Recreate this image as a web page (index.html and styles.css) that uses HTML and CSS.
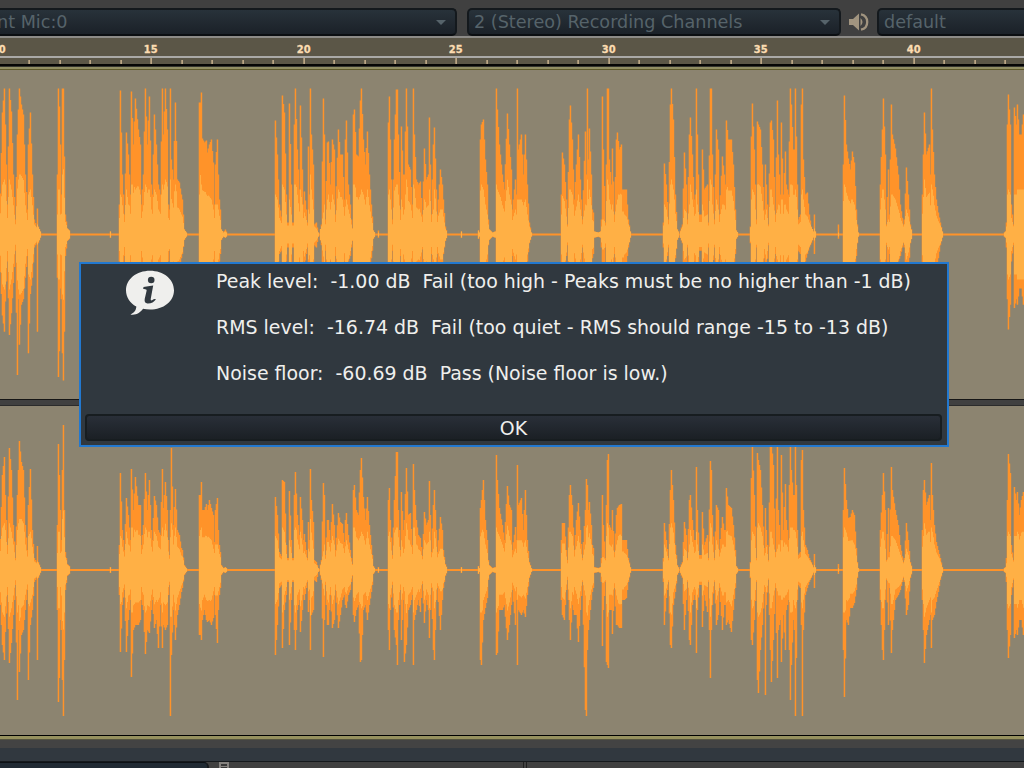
FILE: index.html
```html
<!DOCTYPE html>
<html lang="en">
<head>
<meta charset="utf-8">
<title>ACX Check</title>
<link rel="stylesheet" href="styles.css">
</head>
<body>
<div class="app">
  <header class="toolbar">
    <div class="combo combo-mic"><span>nt Mic:0</span><i class="arrow"></i></div>
    <div class="combo combo-channels"><span>2 (Stereo) Recording Channels</span><i class="arrow"></i></div>
    <svg class="speaker" width="22" height="20" viewBox="0 0 22 20">
      <path d="M1 7H5L11 1.5V18.5L5 13H1Z" fill="#a1947f"/>
      <path d="M12.5 6Q16.5 10 12.5 14Z" fill="#a1947f"/>
      <path d="M13 2.3C21.3 4 21.3 16 13 17.7" fill="none" stroke="#a1947f" stroke-width="2.3"/>
    </svg>
    <div class="combo combo-output"><span>default</span></div>
  </header>
  <div class="ruler">
    <svg id="ruler" width="1024" height="31"></svg>
  </div>
  <main class="tracks">
    <svg class="channel" id="left" width="1024" height="329"></svg>
    <div class="divider"></div>
    <svg class="channel" id="right" width="1024" height="329"></svg>
  </main>
  <div class="track-edge"></div>
  <div class="gap"></div>
  <div class="status"></div>
  <footer class="bottom">
    <div class="field"></div><div class="box"></div><div class="grip"></div>
  </footer>
</div>
<section class="dialog">
  <div class="message">
    <svg class="info" width="50" height="46" viewBox="0 0 50 46">
      <path d="M25 0.7C38.5 0.7 49 9 49 20.2S38.5 39.5 25 39.5C22.5 39.5 20.2 39.2 18 38.7C15.500 42.500 11 45.500 5.500 44.500C9 43 11.300 40 11.300 36.500C5 33 1 27.200 1 20.200C1 9 11.500 0.7 25 0.7Z" fill="#efefed"/>
      <circle cx="26.200" cy="10" r="3.300" fill="#30383f"/>
      <path d="M18.500 17Q23 16.500 28.200 15.600L25.800 28.500Q25.200 31.300 27.500 30Q29 28.700 31 29.300Q28 33.700 22.500 33.500Q19 33 19.700 29L21.600 20.700Q22 18.700 18.200 19Z" fill="#30383f"/>
    </svg>
    <div class="lines">
      <p>Peak level:&nbsp; -1.00 dB&nbsp; Fail (too high - Peaks must be no higher than -1 dB)</p>
      <p>RMS level:&nbsp; -16.74 dB&nbsp; Fail (too quiet - RMS should range -15 to -13 dB)</p>
      <p>Noise floor:&nbsp; -60.69 dB&nbsp; Pass (Noise floor is low.)</p>
    </div>
  </div>
  <button class="ok">OK</button>
</section>
<script src="wave.js"></script>
</body>
</html>
```

FILE: styles.css
```css
* { box-sizing: border-box; }
body { margin: 0; width: 1024px; height: 768px; overflow: hidden; background: #404040; font-family: "DejaVu Sans", sans-serif; }
.app { display: flex; flex-direction: column; height: 768px; }
.toolbar { height: 36px; flex: none; display: flex; padding-top: 8px; background: #404040; }
.combo { height: 28px; flex: none; display: flex; align-items: center; justify-content: space-between; border: 2px solid #14191d; border-bottom-color: #0b0e11; border-radius: 5px; background: linear-gradient(#28323a, #1b2128); color: #56636a; font-size: 17.6px; white-space: nowrap; }
.combo-mic { width: 457px; margin-right: 10px; border-left: 0; border-radius: 0 5px 5px 0; }
.combo-mic span { margin-left: -3px; }
.combo-channels { width: 374px; padding-left: 5px; }
.combo-output { width: 160px; padding-left: 5px; }
.arrow { width: 0; height: 0; border: 5px solid transparent; border-top-color: #56636a; border-bottom: 0; margin-right: 9px; }
.speaker { flex: none; margin: 4px 7px 0 7px; }
.ruler { height: 34px; flex: none; background: linear-gradient(#8d8b87 0 2px, #5b5647 2px 20px, #aaa9a7 20px 22px, #5b5647 22px 28px, #050505 28px 30px, #34342f 30px 31px, #918e63 31px 33px, #5e592b 33px 34px); }
.ruler svg { display: block; }
.ruler text { font: bold 11px "DejaVu Sans Condensed", "DejaVu Sans"; font-stretch: condensed; fill: #fbdcb1; stroke: #fbdcb1; stroke-width: 0.3px; text-anchor: middle; }
.tracks { flex: none; height: 665px; background: #8c8470; }
.channel { display: block; }
.peak { fill: #ff9329; }
.rms { fill: #ffb045; }
.divider { height: 7px; background: #404040; border-top: 1px solid #161616; border-bottom: 1px solid #2b2b2b; }
.track-edge { height: 5px; flex: none; border-top: 1px solid #000; background: #96915f; border-bottom: 1px solid #55543f; }
.gap { height: 8px; flex: none; background: #434343; }
.status { height: 14px; flex: none; background: #31383f; border-bottom: 1px solid #15191c; }
.bottom { flex: 1; display: flex; background: #404040; }
.field { width: 209px; margin-right: 10px; background: #202a33; border-top: 1px solid #0c1014; border-right: 2px solid #15191d; border-radius: 0 5px 0 0; }
.box { width: 10px; border: 2px solid #85827f; border-bottom: 0; background: linear-gradient(#383838 2px, #85827f 2px 3px, #383838 3px); }
.grip { width: 4px; margin-left: 294px; border: solid #1f1f1f; border-width: 0 1px; }
.dialog { position: absolute; left: 79px; top: 262px; width: 870px; height: 185px; padding: 2px 5px 4px 4px; border: 2px solid #2278cf; background: #30383f; color: #efefed; display: flex; flex-direction: column; }
.message { display: flex; flex: none; height: 148px; }
.info { margin: 4px 0 0 40px; flex: none; }
.lines { margin: 1px 0 0 41px; font-size: 18.96px; white-space: nowrap; }
.lines p { margin: 0; height: 46px; line-height: 28px; }
.ok { height: 27px; padding: 0; border: 2px solid #171d20; border-radius: 4px; background: linear-gradient(#292f38, #1b2025); color: #efefed; font: 18.96px/22px "DejaVu Sans", sans-serif; }
```

FILE: wave.js
```js
// Envelope keypoints: x, left-channel peak, right-channel peak, right-channel trough, rms.
// Values left out are derived from the left-channel peak.
const keys = `0 41 31 35 30|2 122 95 75 50|4 146 113 90 55|5 110 75 62 50|7 30 25 25 20|9 146 122 93 55|11 123 100 73 45|13 60 45 45 30|15 15 12 15 12|17 100 75 130 50|18 125 100 60 55|19 146 129 102 60|21 130 108 65 60|23 120 100 60 55|25 60 45 40 35|27 25 20 20 20|28 90 65 110 40|30 122 101 55 45|32 60 40 40 30|34 15 12 12 10|36 8 8 8 8|37 26 24 90 10|38 8 8 8 8|40 3 3 3 3|41 1|56 1|57 60 45 40 20|58 146 126 132 45|59 128 95 108 45|60 90 60 50 20|61 40 30 60 30|62 146 100 110 60|63 146 145 146 70|64 78 60 90 50|65 20 18 20 18|67 6 6 6 6|69 4 4 4 4|70 1|109 1|110 3|111 1|118 1|119 30 25 25 20|120 144 97 82 40|122 60 40 35 35|124 20 20 20 20|126 102 72 82 45|128 80 55 50 30|130 40 30 30 28|131 143 101 107 50|133 90 60 60 50|135 136 93 55 45|138 105 65 55 50|140 90 65 50 40|141 30 25 30 20|143 60 45 40 35|145 146 97 84 50|147 90 60 60 45|149 138 90 63 45|151 50 40 40 30|152 40 30 30 30|154 120 74 58 45|156 90 65 50 40|158 50 40 78 35|160 40 35 35 30|162 146 101 78 50|163 100 62 55 45|165 146 88 60 55|167 105 60 55 50|168 30 30 25 25|169 25 15 15 15|170 146 60 146 55|171 75 122 85 55|173 55 45 40 40|175 132 81 70 50|177 55 40 45 40|179 52 35 35 25|181 40 22 22 20|182 35 20 18 18|184 5 5 5 5|186 2|187 1|198 1|199 132 75 65 40|200 132 75 65 65|201 142 88 70 50|202 96 60 50 48|204 92 60 40 45|206 94 66 50 40|207 82 60 52 40|209 90 70 50 38|211 95 62 55 35|213 72 55 48 25|214 30 28 25 20|215 70 60 45 30|217 95 72 73 30|218 60 40 40 25|219 35 25 25 20|220 25 18 18 15|221 5 5 5 5|223 2|225 5 3 3 3|227 1|274 1|275 114 73 85 40|277 80 55 55 35|279 30 18 18 20|281 18 14 15 14|282 139 90 78 50|284 122 88 40 45|286 40 25 25 20|287 12 12 12 12|288 12 12 12 12|289 131 79 75 35|291 50 30 30 20|292 12 12 12 12|293 12 12 12 12|294 110 75 60 50|295 146 98 80 50|297 85 55 40 45|299 45 35 30 28|300 129 73 62 45|302 65 50 40 30|303 30 30 25 20|304 43 36 30 22|306 25 20 18 15|307 12 12 12 12|308 88 48 42 25|309 40 30 30 30|310 146 101 80 60|311 100 70 45 45|313 70 48 40 25|314 10 10 10 8|316 12 8 12 6|318 2|319 1|321 10 10 10 10|323 136 87 87 22|324 100 75 50 30|325 15 15 15 15|327 92 50 55 35|328 93 50 55 40|330 50 30 25 25|332 95 66 58 40|334 85 45 50 30|335 20 20 20 18|338 105 57 58 45|340 80 48 45 40|342 80 46 30 35|344 35 28 25 20|345 95 50 35 28|346 114 57 38 35|348 50 35 25 25|350 30 20 20 18|351 15 12 12 10|352 6 6 6 6|353 120 80 45 50|354 125 85 52 50|356 80 60 40 45|358 78 55 35 35|360 134 100 92 40|361 146 112 90 45|363 95 73 40 40|365 70 50 35 30|367 103 73 50 45|369 60 45 35 30|371 30 25 22 22|372 18 15 15 15|373 4 4 4 4|375 1|377 1|378 4 3 3 2|379 1|387 1|388 112 70 60 40|389 138 82 80 45|390 95 50 40 35|392 15 15 15 15|394 95 70 60 45|396 145 118 75 50|397 145 118 95 50|398 100 60 50 40|400 25 20 20 18|401 108 78 70 35|403 60 40 30 20|404 60 50 92 25|406 146 102 75 55|408 70 55 40 40|410 65 57 35 30|412 30 25 25 25|413 146 106 95 50|414 100 80 50 50|416 55 50 40 30|418 50 35 30 30|420 53 32 42 22|422 20 14 14 14|424 86 58 53 35|426 55 45 30 30|428 60 50 40 35|429 117 89 68 45|430 70 55 40 35|431 20 18 18 16|433 90 65 80 25|434 107 80 90 45|436 45 40 30 30|437 20 18 18 16|440 65 53 60 25|442 50 40 30 25|443 35 20 18 18|445 8 6 6 6|447 1|460 1|461 3|462 1|477 1|478 4|479 2|480 95 62 90 50|481 110 70 95 50|483 115 90 50 45|485 75 50 38 30|487 50 30 28 20|488 15 10 10 10|489 5 5 5 5|492 2|495 3|496 146 115 85 50|497 125 90 83 45|499 90 62 40 40|502 60 45 40 38|504 45 30 35 30|507 121 84 70 55|509 90 65 55 40|511 65 60 35 30|512 25 20 20 15|515 55 43 55 25|516 40 30 30 20|517 146 105 95 35|518 85 65 40 35|521 100 72 45 35|523 60 40 40 30|525 100 80 47 35|527 50 30 25 20|529 12 8 8 8|531 2|532 1|560 1|561 40 30 30 20|562 82 47 45 40|564 70 47 50 35|566 35 20 20 18|567 10 10 10 8|569 115 75 50 45|570 129 85 70 45|572 95 65 35 40|574 35 20 45 20|576 70 50 45 28|578 100 67 72 40|580 55 40 40 25|582 15 12 12 12|585 103 60 140 30|586 60 91 146 50|587 146 85 80 55|588 75 60 60 50|589 106 68 50 45|591 60 45 30 30|592 25 25 22 20|593 22 22 18 18|594 3|598 2|600 3|601 15 12 12 8|602 138 75 76 15|603 85 45 40 15|605 12 12 12 12|606 70 65 92 40|607 146 110 95 55|608 146 116 98 50|609 75 45 40 35|611 50 40 40 30|612 86 60 64 30|614 20 18 18 16|616 95 55 55 30|617 102 62 55 35|619 85 65 58 45|621 90 66 58 40|622 45 30 30 28|624 45 30 30 20|626 45 30 28 18|628 15 12 12 12|630 3|631 1|662 1|663 12 12 12 10|664 71 47 55 30|666 50 30 28 25|668 15 12 12 12|670 130 80 75 50|671 146 100 78 55|673 115 70 35 45|675 40 25 22 25|677 5 5 5 5|679 1|682 10 8 8 8|684 82 48 60 25|686 50 35 30 22|687 15 12 12 12|689 100 70 70 30|690 117 75 75 50|692 80 50 35 35|694 35 30 25 20|695 40 30 30 25|696 146 103 83 45|697 100 60 40 30|699 20 15 15 15|701 20 15 15 15|702 85 58 57 30|704 45 25 25 18|707 50 35 42 20|708 12 12 12 12|710 146 109 108 55|711 146 100 60 50|712 80 55 35 30|714 15 12 12 12|716 105 65 55 35|718 85 60 45 25|719 20 20 18 16|722 78 53 60 30|724 60 40 35 30|725 50 40 35 35|726 114 82 55 45|728 95 65 50 50|731 95 62 62 45|733 70 45 40 35|735 25 20 18 20|736 4|738 1|749 1|750 8 8 8 8|751 98 92 70 35|752 131 124 75 45|754 85 75 50 40|756 15 12 12 12|757 113 117 110 50|758 110 110 123 55|760 105 100 80 50|762 70 65 55 40|764 25 22 22 18|765 70 62 125 20|766 50 40 35 30|768 10 10 10 10|770 112 125 80 45|771 114 128 112 45|773 95 105 70 30|775 20 18 18 18|777 134 125 108 25|778 80 60 60 30|780 40 30 50 30|781 112 115 92 35|783 40 40 45 35|785 83 86 80 30|786 50 50 40 30|788 40 30 30 25|790 146 140 130 50|791 130 100 95 50|793 85 75 50 50|794 85 75 60 50|795 146 130 146 45|797 50 40 30 30|798 15 15 15 15|800 20 18 18 18|801 130 110 55 40|802 146 120 146 45|803 75 60 60 35|805 40 25 25 20|807 42 20 18 18|809 20 12 12 12|811 8 8 8 8|813 3|814 20 16 18 6|815 3|816 1|837 1|838 10 6 4 2|839 1|842 1|843 70 60 80 50|844 139 102 127 50|846 90 70 50 45|848 76 52 55 35|850 65 53 38 35|852 83 60 38 35|854 72 55 33 30|856 25 22 20 20|857 10 8 8 8|858 2|859 1|879 1|880 50 40 30 30|882 105 75 80 45|883 136 97 90 45|885 80 60 30 25|886 10 10 10 10|888 65 62 55 15|889 20 18 18 16|891 130 103 83 40|892 100 80 60 40|895 86 60 30 35|898 60 45 25 25|900 30 25 20 18|903 10 8 8 8|904 15 12 12 12|906 67 47 45 25|908 40 30 35 18|910 10 8 8 8|912 1|921 1|922 40 40 30 30|923 80 80 60 40|924 122 90 93 55|926 80 65 65 45|929 90 75 50 45|930 60 50 45 45|931 146 107 78 50|932 105 75 50 45|934 60 45 45 35|936 35 28 32 30|938 22 20 22 18|940 12 12 10 10|942 3|943 1|1003 1|1005 3|1006 12 12 12 8|1007 110 70 60 40|1008 140 116 88 45|1010 110 97 65 40|1011 30 25 25 25|1013 10 10 10 10|1014 127 83 68 40|1016 110 70 60 40|1017 130 78 65 45|1019 100 55 50 45|1021 100 70 50 45|1023 120 78 65 45`
  .split('|').map(s => {
    const [x, a, b = a, c = b, r = a] = s.split(' ').map(Number);
    return [x, a, b, c, r];
  });

function sample(x) {
  let i = 0;
  while (i < keys.length - 2 && keys[i + 1][0] <= x) i++;
  const p = keys[i], q = keys[i + 1], t = (x - p[0]) / (q[0] - p[0]);
  return p.map((v, n) => v + (q[n] - v) * t);
}

// Columns are slightly wider than a pixel so that narrow spikes stay solid.
function draw(id, centre, right) {
  let peak = '', rms = '';
  for (let x = 0; x < 1024; x++) {
    const [, a, b, c, r] = sample(x);
    const up = Math.max(1, right ? b : a);
    const down = Math.max(1, right ? c : Math.min(146, c * 1.08));
    peak += `M${x - 0.3} ${centre - up}h1.5V${centre + down}h-1.5Z`;
    if (up > 1.5) {
      const ru = right ? Math.min(r * 0.85, up * 0.48 + 4) : Math.min(r, up * 0.42 + 4);
      const rd = right ? Math.min(r * 0.85, down * 0.52 + 4) : ru;
      rms += `M${x} ${centre - Math.min(ru, up)}h1V${centre + Math.min(rd, down)}h-1Z`;
    }
  }
  document.getElementById(id).innerHTML = `<path class="peak" d="${peak}"/><path class="rms" d="${rms}"/>`;
}
draw('left', 164.5, false);
draw('right', 164, true);

let marks = '';
for (let n = 10; n <= 43; n++) {
  const x = Math.round(151 + (n - 15) * 30.5), major = n % 5 === 0;
  marks += `<rect x="${x - 0.5}" y="${major ? 22 : 24}" width="1.2" height="${major ? 6 : 4}" fill="#e5c9a0"/>`;
  if (major) marks += `<text x="${x - 0.3}" y="16.5">${n}</text>`;
}
document.getElementById('ruler').innerHTML = marks;
```
